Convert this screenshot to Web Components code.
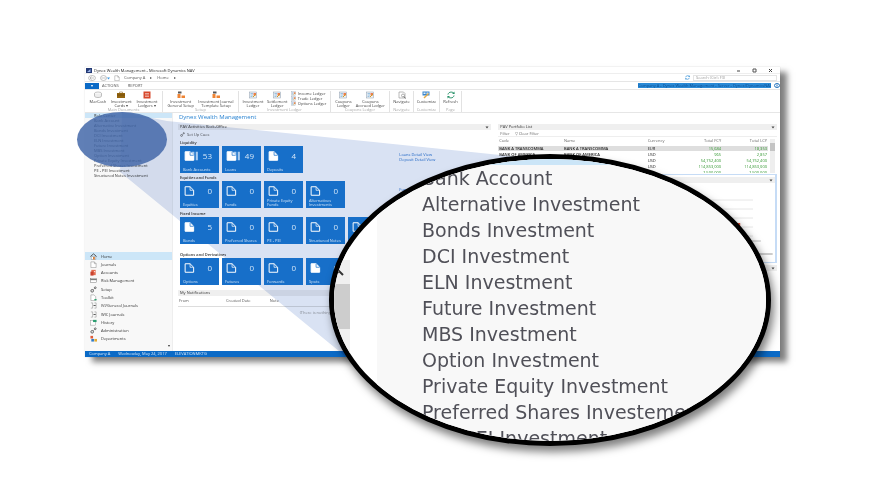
<!DOCTYPE html>
<html lang="en">
<head>
<meta charset="UTF-8">
<title>Dynex Wealth Management</title>
<style>
    body {
        margin: 0;
        background: #fff;
        font-family: "Open Sans", "Noto Sans", sans-serif;
    }
</style>
</head>
<body>
<wealth-page></wealth-page>

<script>
const base = `
    * { box-sizing: border-box; }
    :host { display: block; }
    button, input { font: inherit; color: inherit; border: 0; margin: 0; padding: 0; background: none; }
    a { color: inherit; text-decoration: none; }
    svg { display: block; flex: none; }
`;

const icons = {
    cash: '<ellipse cx="8" cy="5" rx="7" ry="3" fill="#fff" stroke="#888"/><path d="M1 5v5c0 4 14 4 14 0V5" fill="#eee" stroke="#888"/>',
    card: '<path d="M5 4V2h6v2" fill="none" stroke="#7a5410"/><rect y="4" width="16" height="10" fill="#946510"/><path d="M0 8h16" stroke="#5b3b00"/>',
    ledger: '<rect x="1" y="1" width="14" height="14" fill="#d8482c"/><path d="M4 5h8M4 8h8M4 11h8" stroke="#fff"/>',
    setup: '<path d="M2 1h7v4H2z" fill="#555"/><rect x="1" y="6" width="6" height="8" fill="#ee8434"/><rect x="9" y="9" width="7" height="5" fill="#ee8434"/>',
    sheet: '<rect x="1" y="2" width="14" height="12" fill="#eef3f8" stroke="#8a9aab"/><path d="M3 5h5M3 8h5M3 11h4" stroke="#4a90c8"/><rect x="9" y="4" width="5" height="5" fill="#ec7b50"/><path d="M8 12l6-6" stroke="#d39a24" stroke-width="2"/>',
    find: '<path d="M2 2h9l3 3v9H2z" fill="#fff" stroke="#777"/><circle cx="10" cy="9" r="3" fill="#fff" stroke="#666"/><path d="M12 11l3 4" stroke="#666" stroke-width="2"/>',
    custom: '<rect x="1" y="1" width="14" height="8" fill="#3a86cc"/><path d="M3 3h4v3H3zM9 3h4v3H9z" fill="#dfeefa"/><path d="M4 14l9-9" stroke="#e0aa4b" stroke-width="3"/>',
    refresh: '<path d="M2 7c1-6 10-6 12-2M14 9c-1 6-10 6-12 2" fill="none" stroke="#269168" stroke-width="2"/><path d="M15 1v5h-5zM1 15v-5h5z" fill="#269168"/>',
    home: '<path d="M1 8l7-6 7 6" fill="none" stroke="#444" stroke-width="2"/><path d="M3 8h10v7H3z" fill="#fff" stroke="#777"/><path d="M7 9h4v6H7z" fill="#d97a32"/>',
    doc: '<path d="M2 2h8l4 4v9H2z" fill="#fff" stroke="#777"/><path d="M10 2v4h4" fill="none" stroke="#777"/>',
    book: '<path d="M3 2h10v12H3z" fill="#e36c50"/><path d="M1 6h7v9H1z" fill="#c94330"/><path d="M9 6h3" stroke="#fff" stroke-width="2"/>',
    box: '<rect x="1" y="3" width="14" height="10" fill="#fff" stroke="#666"/><path d="M1 6h14" stroke="#555" stroke-width="2"/>',
    tools: '<circle cx="5" cy="11" r="3" fill="none" stroke="#555" stroke-width="2"/><circle cx="12" cy="4" r="2" fill="none" stroke="#555" stroke-width="2"/><path d="M7 9l4-4" stroke="#555"/>',
    toolkit: '<path d="M2 2h7l4 4v9H2z" fill="#fff" stroke="#777"/><path d="M10 13h5" stroke="#27a06b" stroke-width="3"/>',
    journal: '<path d="M2 2h4v12H2M10 2h4v12h-4" fill="none" stroke="#777"/><path d="M8 8h5" stroke="#444" stroke-width="2"/>',
    history: '<rect x="1" y="3" width="12" height="11" fill="#fff" stroke="#888"/><path d="M7 2h8v5H7z" fill="#299d6f"/>',
    people: '<rect x="1" y="2" width="6" height="6" fill="#df5b35"/><rect x="3" y="9" width="6" height="6" fill="#2f7ac7"/><rect x="10" y="9" width="6" height="6" fill="#e2aa33"/>'
};

const icon = (name, size) => `<svg width="${size}" height="${size}" viewBox="0 0 16 16">${icons[name]}</svg>`;

// Large or small command in the ribbon
class RibbonButton extends HTMLElement {
    constructor() {
        super();
        this.attachShadow({ mode: "open" });
        const small = this.hasAttribute("small");
        this.shadowRoot.innerHTML = `
            <style>${base}
                button {
                    display: flex;
                    flex-direction: ${small ? "row" : "column"};
                    align-items: center;
                    gap: ${small ? 2 : 1}px;
                    font-size: 4px;
                    line-height: 4px;
                    color: #444;
                    white-space: nowrap;
                }
            </style>
            <button>${icon(this.getAttribute("icon"), small ? 5 : 8)}<span><slot></slot></span></button>
        `;
    }
}

class RibbonGroup extends HTMLElement {
    constructor() {
        super();
        this.attachShadow({ mode: "open" });
        this.shadowRoot.innerHTML = `
            <style>${base}
                :host { display: flex; flex-direction: column; border-right: 1px solid #e2e2e2; }
                .items { flex: 1; display: flex; justify-content: space-evenly; align-items: flex-start; }
                .name { font-size: 4px; line-height: 4px; text-align: center; color: #aaa; white-space: nowrap; }
            </style>
            <div class="items"><slot></slot></div>
            <div class="name">${this.getAttribute("name")}</div>
        `;
    }
}

class AppRibbon extends HTMLElement {
    constructor() {
        super();
        this.attachShadow({ mode: "open" });
        this.shadowRoot.innerHTML = `
            <style>${base}
                :host {
                    display: grid;
                    grid-template-columns: 78px 76px 92px 59px 24px 26px 22px;
                    height: 24px;
                    padding: 1px 0 0;
                    border: 1px solid #e6e6e6;
                    border-width: 1px 0;
                }
                .stack { display: flex; flex-direction: column; }
            </style>
            <ribbon-group name="Main Documents">
                <ribbon-button icon="cash">MarCash</ribbon-button>
                <ribbon-button icon="card">Investment<br>Cards ▾</ribbon-button>
                <ribbon-button icon="ledger">Investment<br>Ledgers ▾</ribbon-button>
            </ribbon-group>
            <ribbon-group name="Setup">
                <ribbon-button icon="setup">Investment<br>General Setup</ribbon-button>
                <ribbon-button icon="setup">Investment Journal<br>Template Setup</ribbon-button>
            </ribbon-group>
            <ribbon-group name="Investment Ledger">
                <ribbon-button icon="sheet">Investment<br>Ledger</ribbon-button>
                <ribbon-button icon="sheet">Settlement<br>Ledger</ribbon-button>
                <div class="stack">
                    <ribbon-button small icon="sheet">Income Ledger</ribbon-button>
                    <ribbon-button small icon="sheet">Trade Ledger</ribbon-button>
                    <ribbon-button small icon="sheet">Options Ledger</ribbon-button>
                </div>
            </ribbon-group>
            <ribbon-group name="Coupons Ledger">
                <ribbon-button icon="sheet">Coupons<br>Ledger</ribbon-button>
                <ribbon-button icon="sheet">Coupons<br>Accrued Ledger</ribbon-button>
            </ribbon-group>
            <ribbon-group name="Navigate"><ribbon-button icon="find">Navigate</ribbon-button></ribbon-group>
            <ribbon-group name="Customize"><ribbon-button icon="custom">Customize</ribbon-button></ribbon-group>
            <ribbon-group name="Page"><ribbon-button icon="refresh">Refresh</ribbon-button></ribbon-group>
        `;
    }
}

class AppHeader extends HTMLElement {
    constructor() {
        super();
        this.attachShadow({ mode: "open" });
        this.shadowRoot.innerHTML = `
            <style>${base}
                :host { font-size: 4px; line-height: 5px; color: #555; }
                .row { display: flex; align-items: center; gap: 4px; }
                .title { height: 6px; padding: 0 7px 0 1px; gap: 2px; color: #222; }
                .controls { display: flex; gap: 11px; margin-left: auto; }
                .address { height: 8px; padding: 0 3px; border-top: 1px solid #eee; }
                .path { display: flex; gap: 5px; }
                .search { display: flex; width: 92px; margin-left: auto; gap: 3px; }
                input { width: 84px; height: 6px; border: 1px solid #e4e4e4; padding-left: 2px; }
                input::placeholder { color: #999; opacity: 1; }
                .tabs { height: 8px; border-top: 1px solid #e6e6e6; gap: 3px; }
                .tabs button { height: 6px; line-height: 5px; }
                .file { width: 14px; background: #0b6ac6; color: #fff; }
                .report { margin-left: 6px; }
                .company { width: 133px; margin-left: auto; background: #2a8ad6; color: #0a4c91; text-align: center; overflow: hidden; white-space: nowrap; }
            </style>
            <div class="row title">
                <svg width="6" height="5" viewBox="0 0 12 10"><path d="M0 0h12v10H0z" fill="#243a75"/><path d="M2 8l7-6v6" fill="#9bb5e8"/></svg>
                <span>Dynex Wealth Management - Microsoft Dynamics NAV</span>
                <div class="controls">
                    <button aria-label="Minimize"><svg width="5" height="5"><path d="M1 3h3" stroke="#444"/></svg></button>
                    <button aria-label="Restore"><svg width="5" height="5"><path d="M1 1h3v3H1z" fill="none" stroke="#555"/></svg></button>
                    <button aria-label="Close"><svg width="5" height="5"><path d="M1 1l3 3M4 1L1 4" stroke="#444"/></svg></button>
                </div>
            </div>
            <div class="row address">
                <button aria-label="Back"><svg width="8" height="6" viewBox="0 0 16 12"><ellipse cx="8" cy="6" rx="7" ry="5" fill="#fff" stroke="#888"/><path d="M12 6H4l3-3M4 6l3 3" fill="none" stroke="#888"/></svg></button>
                <button aria-label="Forward"><svg width="10" height="6" viewBox="0 0 20 12"><ellipse cx="7" cy="6" rx="6" ry="5" fill="#fff" stroke="#888"/><path d="M3 6h8" stroke="#888"/><path d="M14 5h6l-3 4z" fill="#3a96e0"/></svg></button>
                ${icon("doc", 6)}
                <div class="path"><a href="#company">Company A</a><span>▸</span><a href="#home">Home</a><span>▸</span></div>
                <label class="search"><svg width="5" height="5" viewBox="0 0 16 16">${icons.refresh.replaceAll("#269168", "#2a8ad6")}</svg><input type="search" aria-label="Search" placeholder="Search (Ctrl+F3)"></label>
            </div>
            <div class="row tabs">
                <button class="file">▾</button>
                <button>ACTIONS</button>
                <button class="report">REPORT</button>
                <span class="company">Company A - Dynex Wealth Management - Server - Dynex/DynamicsNAV</span>
                <svg width="6" height="5" viewBox="0 0 12 10"><ellipse cx="6" cy="5" rx="5" ry="4" fill="#fff" stroke="#2473bd" stroke-width="2"/><path d="M6 3v4" stroke="#2473bd" stroke-width="2"/></svg>
            </div>
            <app-ribbon></app-ribbon>
        `;
    }
}

class SideNav extends HTMLElement {
    constructor() {
        super();
        this.attachShadow({ mode: "open" });
        const places = ["Role Center", "Bank Account", "Alternative Investment", "Bonds Investment", "DCI Investment",
            "ELN Investment", "Future Investment", "MBS Investment", "Option Investment", "Private Equity Investment",
            "Preferred Shares Investment", "PE - PEI Investment", "Structured Notes Investment"];
        const areas = [["home", "Home"], ["doc", "Journals"], ["book", "Accounts"], ["box", "Risk Management"],
            ["tools", "Setup"], ["toolkit", "Toolkit"], ["journal", "IVI/General Journals"], ["journal", "WIC Journals"],
            ["history", "History"], ["tools", "Administration"], ["people", "Departments"]];
        this.shadowRoot.innerHTML = `
            <style>${base}
                :host {
                    display: flex;
                    flex-direction: column;
                    background: #f8f8f8;
                    border-right: 1px solid #eee;
                    font-size: 4px;
                    color: #333;
                }
                a { display: flex; align-items: center; white-space: nowrap; }
                .places a { height: 5px; line-height: 5px; padding-left: 9px; }
                .areas { display: grid; grid-auto-rows: 1fr; height: 91px; margin-top: auto; }
                .areas a { gap: 4px; padding-left: 5px; }
                .current { background: #cce6f8; }
                .more { height: 8px; padding-right: 2px; text-align: right; line-height: 6px; }
            </style>
            <nav class="places">${places.map((p, i) => `<a href="#"${i ? "" : ' class="current"'}>${p}</a>`).join("")}</nav>
            <nav class="areas">${areas.map(([n, t], i) => `<a href="#"${i ? "" : ' class="current"'}>${icon(n, 7)}${t}</a>`).join("")}</nav>
            <div class="more">▾</div>
        `;
    }
}

class PanelBar extends HTMLElement {
    constructor() {
        super();
        this.attachShadow({ mode: "open" });
        this.shadowRoot.innerHTML = `
            <style>${base}
                :host { display: flex; justify-content: space-between; align-items: center; height: 6px; padding: 0 2px; background: #efefef; font-size: 4px; line-height: 6px; color: #333; }
            </style>
            <span><slot></slot></span>
            <svg width="4" height="3" viewBox="0 0 8 6"><path d="M1 1h6L4 5z" fill="#444"/></svg>
        `;
    }
}

// Cue tile with a document stack, a count and a label
class CueTile extends HTMLElement {
    constructor() {
        super();
        this.attachShadow({ mode: "open" });
        const count = Number(this.getAttribute("count"));
        const fill = count > 0 || this.hasAttribute("filled") ? "#fff" : "none";
        const stack = count > 10 ? '<path d="M12 1h4v12h-3zM18 1h3v12h-3z" fill="#a9cbee"/>' : "";
        this.shadowRoot.innerHTML = `
            <style>${base}
                :host { position: relative; z-index: 2; width: 39px; height: 27px; flex: none; }
                button {
                    display: flex;
                    flex-direction: column;
                    justify-content: space-between;
                    width: 100%;
                    height: 100%;
                    padding: 5px 3px 1px;
                    background: #176fc9;
                    color: #fff;
                    text-align: left;
                }
                .top { display: flex; align-items: center; justify-content: space-between; padding-right: 4px; }
                .count { font-size: 8px; line-height: 10px; color: #d3e6f8; }
                .label { font-size: 4px; line-height: 4px; color: #cfe2f6; white-space: nowrap; }
            </style>
            <button>
                <div class="top">
                    <svg width="17" height="10" viewBox="0 0 24 14">${stack}<path d="M3 1h7l5 5v7H3z" fill="${fill}" stroke="#fff" stroke-width="1.4"/><path d="M10 1v5h5" fill="none" stroke="${fill === "none" ? "#fff" : "#176fc9"}"/></svg>
                    <span class="count">${count}</span>
                </div>
                <span class="label"><slot></slot></span>
            </button>
        `;
    }
}

class CueGroup extends HTMLElement {
    constructor() {
        super();
        this.attachShadow({ mode: "open" });
        this.shadowRoot.innerHTML = `
            <style>${base}
                :host { padding: 2px 2px 0; }
                h3 { margin: 0; font-size: 4px; line-height: 6px; font-weight: 600; color: #333; }
                .row { display: flex; gap: 3px; }
                .links { display: flex; flex-direction: column; width: 90px; margin-left: auto; padding-top: 6px; font-size: 4px; line-height: 5px; color: #2272cf; white-space: nowrap; }
            </style>
            <h3>${this.getAttribute("name")}</h3>
            <div class="row"><slot></slot><div class="links"><slot name="link"></slot></div></div>
        `;
    }
}

class RoleCenter extends HTMLElement {
    constructor() {
        super();
        this.attachShadow({ mode: "open" });
        this.shadowRoot.innerHTML = `
            <style>${base}
                :host { font-size: 4px; line-height: 5px; color: #555; }
                h1 { margin: 0 0 3px; padding-left: 1px; font-size: 6px; line-height: 8px; font-weight: 400; color: #2a84d2; }
                .setup { display: flex; align-items: center; gap: 2px; height: 8px; padding-left: 2px; }
                .late { padding-top: 8px; }
                .fixed { padding-top: 3px; }
                a { color: #2272cf; }
                table { width: 100%; border-collapse: collapse; table-layout: fixed; }
                th { height: 10px; padding: 0 1px; border-bottom: 1px solid #ddd; text-align: left; font-weight: 400; }
                td { height: 13px; padding: 0; text-align: center; color: #999; }
                panel-bar.notes { margin-top: 5px; }
            </style>
            <h1>Dynex Wealth Management</h1>
            <panel-bar>PAV Activities Back-Office</panel-bar>
            <button class="setup">${icon("tools", 5)}Set Up Cues</button>
            <cue-group name="Liquidity">
                <cue-tile count="53">Bank Accounts</cue-tile>
                <cue-tile count="49">Loans</cue-tile>
                <cue-tile count="4">Deposits</cue-tile>
                <a slot="link" href="#">Loans Detail View</a>
                <a slot="link" href="#">Deposit Detail View</a>
            </cue-group>
            <cue-group name="Equities and Funds">
                <cue-tile count="0">Equities</cue-tile>
                <cue-tile count="0">Funds</cue-tile>
                <cue-tile count="0">Private Equity<br>Funds</cue-tile>
                <cue-tile count="0">Alternatives<br>Investments</cue-tile>
                <a slot="link" href="#">Funds Detail</a>
            </cue-group>
            <cue-group class="fixed" name="Fixed Income">
                <cue-tile count="5">Bonds</cue-tile>
                <cue-tile count="0">Preferred Shares</cue-tile>
                <cue-tile count="0">PE - PEI</cue-tile>
                <cue-tile count="0">Structured Notes</cue-tile>
                <cue-tile count="0">MBS</cue-tile>
            </cue-group>
            <cue-group class="late" name="Options and Derivatives">
                <cue-tile count="0">Options</cue-tile>
                <cue-tile count="0">Futures</cue-tile>
                <cue-tile count="0">Forwards</cue-tile>
                <cue-tile count="0" filled>Spots</cue-tile>
            </cue-group>
            <panel-bar class="notes">My Notifications</panel-bar>
            <table>
                <colgroup><col style="width: 15%"><col style="width: 14%"><col></colgroup>
                <thead><tr><th>From</th><th>Created Date</th><th>Note</th></tr></thead>
                <tbody><tr><td colspan="3">(There is nothing to show in this view)</td></tr></tbody>
            </table>
        `;
    }
}

class PortfolioList extends HTMLElement {
    constructor() {
        super();
        this.attachShadow({ mode: "open" });
        const rows = [
            ["BANK A TRANSCOMMA", "BANK A TRANSCOMMA", "EUR", "15,684", "18,353"],
            ["BANK OF AMERICA", "BANK OF AMERICA", "USD", "965", "2,857"],
            ["", "", "USD", "54,752,400", "54,752,400"],
            ["", "", "USD", "114,853,000", "114,853,000"],
            ["", "", "", "2,500,000", "2,500,000"]
        ];
        this.shadowRoot.innerHTML = `
            <style>${base}
                :host { font-size: 4px; line-height: 5px; color: #666; }
                .filter { display: flex; gap: 5px; height: 7px; align-items: center; padding-left: 2px; border-bottom: 1px solid #eee; }
                .list { display: flex; height: 36px; overflow: hidden; }
                table { flex: 1; border-collapse: collapse; table-layout: fixed; white-space: nowrap; }
                th { height: 8px; padding: 0 1px; text-align: left; font-weight: 400; }
                td { height: 6px; line-height: 5px; padding: 0 1px; color: #222; }
                thead tr { border-bottom: 2px solid #fff; }
                td:nth-child(-n+2) { font-weight: 600; }
                th:nth-child(n+4), td:nth-child(n+4) { text-align: right; }
                td:nth-child(n+4) { color: #2f962d; }
                tbody tr:first-child { background: #dedede; }
                .bar { width: 5px; margin: 2px 2px 0; background: #eee; }
                .bar div { height: 8px; margin-top: 4px; background: #c4c4c4; }
            </style>
            <panel-bar>PAV Portfolio List</panel-bar>
            <div class="filter"><button>Filter</button><button>▽ Clear Filter</button></div>
            <div class="list">
                <table>
                    <colgroup><col style="width: 24%"><col style="width: 31%"><col style="width: 11%"><col style="width: 17%"><col style="width: 17%"></colgroup>
                    <thead><tr><th>Code</th><th>Name</th><th>Currency</th><th>Total FCY</th><th>Total LCY</th></tr></thead>
                    <tbody>${rows.map(r => `<tr>${r.map(c => `<td>${c}</td>`).join("")}</tr>`).join("")}</tbody>
                </table>
                <div class="bar"><div></div></div>
            </div>
        `;
    }
}

class ChartPanel extends HTMLElement {
    constructor() {
        super();
        this.attachShadow({ mode: "open" });
        this.shadowRoot.innerHTML = `
            <style>${base}
                .chart { height: 89px; border: 1px solid #c6dcf6; border-right-width: 2px; }
                .plot { width: 100%; height: 80px; }
                panel-bar { margin-top: 2px; }
            </style>
            <div class="chart">
                <panel-bar></panel-bar>
                <svg class="plot" viewBox="0 0 280 80" preserveAspectRatio="none">
                    <path d="M20 17h238M20 26h238M20 35h238M20 44h238M20 53h238" stroke="#e6e6e6"/>
                    <rect x="190" y="40" width="55" height="3" fill="#e0553c"/>
                    <path d="M20 58h246" stroke="#bbb"/>
                    <path d="M10 71h268" stroke="#999"/>
                </svg>
            </div>
            <panel-bar></panel-bar>
        `;
    }
}

// Round magnifier holding whatever list is slotted in
class MagnifierLens extends HTMLElement {
    constructor() {
        super();
        this.attachShadow({ mode: "open" });
        this.shadowRoot.innerHTML = `
            <style>${base}
                :host {
                    display: flex;
                    border: 5px solid #000;
                    border-radius: 50%;
                    background: #fff;
                    box-shadow: 3px 6px 8px rgba(0, 0, 0, .5);
                    overflow: hidden;
                }
                .track { width: 16px; padding-top: 111px; background: linear-gradient(#fff 101px, #f0f0f0 101px); }
                .thumb { height: 45px; margin-top: 8px; background: #cdcdcd; }
                .list {
                    flex: 1;
                    margin-left: 27px;
                    border-top: 6px solid #cbe5f7;
                    padding-left: 45px;
                    background: #f8f8f8;
                    font-family: "DejaVu Sans", sans-serif;
                    font-size: 19px;
                    line-height: 26px;
                    color: #505058;
                    white-space: nowrap;
                }
            </style>
            <div class="track">
                <svg width="10" height="6" viewBox="0 0 10 6"><path d="M1 5l4-4 4 4" fill="none" stroke="#333" stroke-width="2"/></svg>
                <div class="thumb"></div>
            </div>
            <div class="list"><slot></slot></div>
        `;
    }
}

class WealthPage extends HTMLElement {
    constructor() {
        super();
        this.attachShadow({ mode: "open" });
        this.shadowRoot.innerHTML = `
            <style>${base}
                :host { position: relative; padding: 67px 110px 143px 85px; }
                .window { background: #fff; box-shadow: 7px 5px 6px rgba(0, 0, 0, .5), 0 0 1px #ccc; }
                .work {
                    display: grid;
                    grid-template-columns: 88px minmax(0, 312fr) minmax(0, 280fr);
                    padding-right: 3px;
                    height: 238px;
                }
                role-center { margin-left: 5px; }
                .right { margin: 11px 0 0 7px; }
                chart-panel { margin-top: 1px; }
                .status { display: flex; gap: 8px; height: 6px; padding-left: 4px; background: #0b6ac6; color: #d6e8fa; font-size: 4px; line-height: 6px; }
                .beam { position: absolute; left: 0; top: 0; z-index: 1; mix-blend-mode: multiply; pointer-events: none; }
                .spot { position: absolute; left: 77px; top: 112px; width: 90px; height: 55px; z-index: 3; border-radius: 50%; background: rgba(65, 103, 168, .84); }
                magnifier-lens { position: absolute; left: 329px; right: 119px; top: 154px; height: 292px; z-index: 4; }
                .lens-row { display: block; color: inherit; }
            </style>
            <main class="window">
                <app-header></app-header>
                <div class="work">
                    <side-nav></side-nav>
                    <role-center></role-center>
                    <div class="right"><portfolio-list></portfolio-list><chart-panel></chart-panel></div>
                </div>
                <footer class="status"><span>Company A</span><span>Wednesday, May 24, 2017</span><span>ELEVATIONMKTG</span></footer>
            </main>
            <svg class="beam" width="560" height="360"><path d="M122 112L167 121L530 158V300L345 356L120 172z" fill="#d9e2f3"/></svg>
            <div class="spot"></div>
            <magnifier-lens>
                ${["Bank Account", "Alternative Investment", "Bonds Investment", "DCI Investment", "ELN Investment",
                    "Future Investment", "MBS Investment", "Option Investment", "Private Equity Investment",
                    "Preferred Shares Investement", "PE - PEI Investment"].map(t => `<a class="lens-row" href="#">${t}</a>`).join("")}
            </magnifier-lens>
        `;
    }
}

customElements.define("ribbon-button", RibbonButton);
customElements.define("ribbon-group", RibbonGroup);
customElements.define("app-ribbon", AppRibbon);
customElements.define("app-header", AppHeader);
customElements.define("side-nav", SideNav);
customElements.define("panel-bar", PanelBar);
customElements.define("cue-tile", CueTile);
customElements.define("cue-group", CueGroup);
customElements.define("role-center", RoleCenter);
customElements.define("portfolio-list", PortfolioList);
customElements.define("chart-panel", ChartPanel);
customElements.define("magnifier-lens", MagnifierLens);
customElements.define("wealth-page", WealthPage);
</script>
</body>
</html>
